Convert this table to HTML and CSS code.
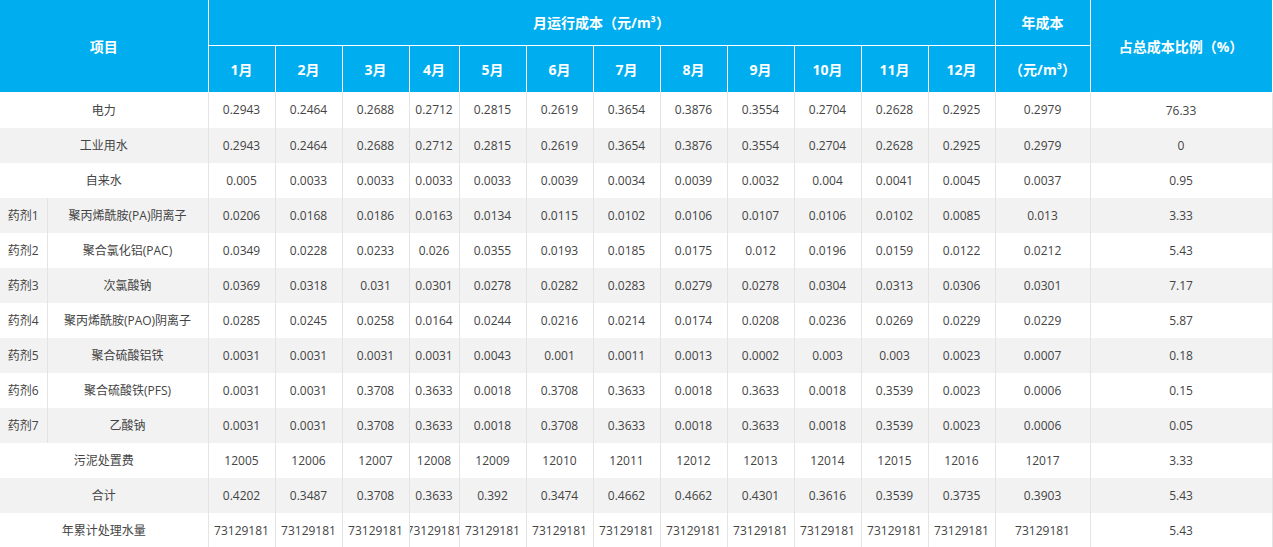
FILE: index.html
```html
<!DOCTYPE html>
<html lang="zh-CN">
<head>
<meta charset="utf-8">
<title>运行成本</title>
<link rel="stylesheet" href="styles.css">
</head>
<body>
<table class="cost">
  <colgroup>
    <col class="c-tag"><col class="c-name">
    <col class="c-m"><col class="c-m"><col class="c-m"><col class="c-narrow">
    <col class="c-m"><col class="c-m"><col class="c-m"><col class="c-m">
    <col class="c-m"><col class="c-m"><col class="c-m"><col class="c-m">
    <col class="c-year"><col class="c-ratio"><col class="c-more">
  </colgroup>
  <thead>
    <tr class="h1">
      <th colspan="2" rowspan="2">项目</th>
      <th colspan="12">月运行成本（元/m³）</th>
      <th>年成本</th>
      <th rowspan="2">占总成本比例（%）</th>
      <th></th>
    </tr>
    <tr class="h2">
      <th>1月</th><th>2月</th><th>3月</th><th>4月</th><th>5月</th><th>6月</th>
      <th>7月</th><th>8月</th><th>9月</th><th>10月</th><th>11月</th><th>12月</th>
      <th>（元/m³）</th>
      <th></th>
    </tr>
  </thead>
  <tbody>
    <tr>
      <td colspan="2">电力</td>
      <td>0.2943</td><td>0.2464</td><td>0.2688</td><td>0.2712</td><td>0.2815</td><td>0.2619</td>
      <td>0.3654</td><td>0.3876</td><td>0.3554</td><td>0.2704</td><td>0.2628</td><td>0.2925</td>
      <td>0.2979</td><td>76.33</td><td></td>
    </tr>
    <tr>
      <td colspan="2">工业用水</td>
      <td>0.2943</td><td>0.2464</td><td>0.2688</td><td>0.2712</td><td>0.2815</td><td>0.2619</td>
      <td>0.3654</td><td>0.3876</td><td>0.3554</td><td>0.2704</td><td>0.2628</td><td>0.2925</td>
      <td>0.2979</td><td>0</td><td></td>
    </tr>
    <tr>
      <td colspan="2">自来水</td>
      <td>0.005</td><td>0.0033</td><td>0.0033</td><td>0.0033</td><td>0.0033</td><td>0.0039</td>
      <td>0.0034</td><td>0.0039</td><td>0.0032</td><td>0.004</td><td>0.0041</td><td>0.0045</td>
      <td>0.0037</td><td>0.95</td><td></td>
    </tr>
    <tr>
      <td class="tag">药剂1</td><td>聚丙烯酰胺(PA)阴离子</td>
      <td>0.0206</td><td>0.0168</td><td>0.0186</td><td>0.0163</td><td>0.0134</td><td>0.0115</td>
      <td>0.0102</td><td>0.0106</td><td>0.0107</td><td>0.0106</td><td>0.0102</td><td>0.0085</td>
      <td>0.013</td><td>3.33</td><td></td>
    </tr>
    <tr>
      <td class="tag">药剂2</td><td>聚合氯化铝(PAC)</td>
      <td>0.0349</td><td>0.0228</td><td>0.0233</td><td>0.026</td><td>0.0355</td><td>0.0193</td>
      <td>0.0185</td><td>0.0175</td><td>0.012</td><td>0.0196</td><td>0.0159</td><td>0.0122</td>
      <td>0.0212</td><td>5.43</td><td></td>
    </tr>
    <tr>
      <td class="tag">药剂3</td><td>次氯酸钠</td>
      <td>0.0369</td><td>0.0318</td><td>0.031</td><td>0.0301</td><td>0.0278</td><td>0.0282</td>
      <td>0.0283</td><td>0.0279</td><td>0.0278</td><td>0.0304</td><td>0.0313</td><td>0.0306</td>
      <td>0.0301</td><td>7.17</td><td></td>
    </tr>
    <tr>
      <td class="tag">药剂4</td><td>聚丙烯酰胺(PAO)阴离子</td>
      <td>0.0285</td><td>0.0245</td><td>0.0258</td><td>0.0164</td><td>0.0244</td><td>0.0216</td>
      <td>0.0214</td><td>0.0174</td><td>0.0208</td><td>0.0236</td><td>0.0269</td><td>0.0229</td>
      <td>0.0229</td><td>5.87</td><td></td>
    </tr>
    <tr>
      <td class="tag">药剂5</td><td>聚合硫酸铝铁</td>
      <td>0.0031</td><td>0.0031</td><td>0.0031</td><td>0.0031</td><td>0.0043</td><td>0.001</td>
      <td>0.0011</td><td>0.0013</td><td>0.0002</td><td>0.003</td><td>0.003</td><td>0.0023</td>
      <td>0.0007</td><td>0.18</td><td></td>
    </tr>
    <tr>
      <td class="tag">药剂6</td><td>聚合硫酸铁(PFS)</td>
      <td>0.0031</td><td>0.0031</td><td>0.3708</td><td>0.3633</td><td>0.0018</td><td>0.3708</td>
      <td>0.3633</td><td>0.0018</td><td>0.3633</td><td>0.0018</td><td>0.3539</td><td>0.0023</td>
      <td>0.0006</td><td>0.15</td><td></td>
    </tr>
    <tr>
      <td class="tag">药剂7</td><td>乙酸钠</td>
      <td>0.0031</td><td>0.0031</td><td>0.3708</td><td>0.3633</td><td>0.0018</td><td>0.3708</td>
      <td>0.3633</td><td>0.0018</td><td>0.3633</td><td>0.0018</td><td>0.3539</td><td>0.0023</td>
      <td>0.0006</td><td>0.05</td><td></td>
    </tr>
    <tr>
      <td colspan="2">污泥处置费</td>
      <td>12005</td><td>12006</td><td>12007</td><td>12008</td><td>12009</td><td>12010</td>
      <td>12011</td><td>12012</td><td>12013</td><td>12014</td><td>12015</td><td>12016</td>
      <td>12017</td><td>3.33</td><td></td>
    </tr>
    <tr>
      <td colspan="2">合计</td>
      <td>0.4202</td><td>0.3487</td><td>0.3708</td><td>0.3633</td><td>0.392</td><td>0.3474</td>
      <td>0.4662</td><td>0.4662</td><td>0.4301</td><td>0.3616</td><td>0.3539</td><td>0.3735</td>
      <td>0.3903</td><td>5.43</td><td></td>
    </tr>
    <tr>
      <td colspan="2">年累计处理水量</td>
      <td>73129181</td><td>73129181</td><td>73129181</td><td><div class="fit">73129181</div></td><td>73129181</td><td>73129181</td>
      <td>73129181</td><td>73129181</td><td>73129181</td><td>73129181</td><td>73129181</td><td>73129181</td>
      <td>73129181</td><td>5.43</td><td></td>
    </tr>
  </tbody>
</table>
</body>
</html>
```

FILE: styles.css
```css
html, body {
  margin: 0;
  padding: 0;
  overflow: hidden;
  background: #fff;
}

.cost {
  border-collapse: collapse;
  table-layout: fixed;
  width: 1372px;
  font-family: "Open Sans", "Noto Sans CJK SC", sans-serif;
  font-size: 12px;
  color: #444;
}

.c-tag { width: 47px; }
.c-name { width: 161px; }
.c-m { width: 67px; }
.c-narrow { width: 50px; }
.c-year { width: 95px; }
.c-ratio { width: 182px; }
.c-more { width: 100px; }

.cost th {
  background: #00aeef;
  color: #fff;
  font-size: 14px;
  font-weight: bold;
  border: 1px solid #fff;
  padding: 0;
  text-align: center;
  white-space: nowrap;
  overflow: hidden;
}

.cost thead tr:first-child th { border-top: none; }
.cost thead tr th:first-child { border-left: none; }
.cost thead tr:last-child th { border-bottom: none; }

.h1 { height: 45px; }
.h2 { height: 47px; }

.cost td {
  height: 35px;
  padding: 0;
  text-align: center;
  white-space: nowrap;
  overflow: hidden;
  border-left: 1px solid #e4e4e4;
  border-right: 1px solid #e4e4e4;
}

.cost tbody tr td:first-child { border-left: none; }
.cost tbody tr:nth-child(even) { background: #f2f2f2; }
.cost tbody tr:last-child td { border-bottom: 1px solid #e4e4e4; }

.fit {
  display: flex;
  justify-content: center;
}
```
